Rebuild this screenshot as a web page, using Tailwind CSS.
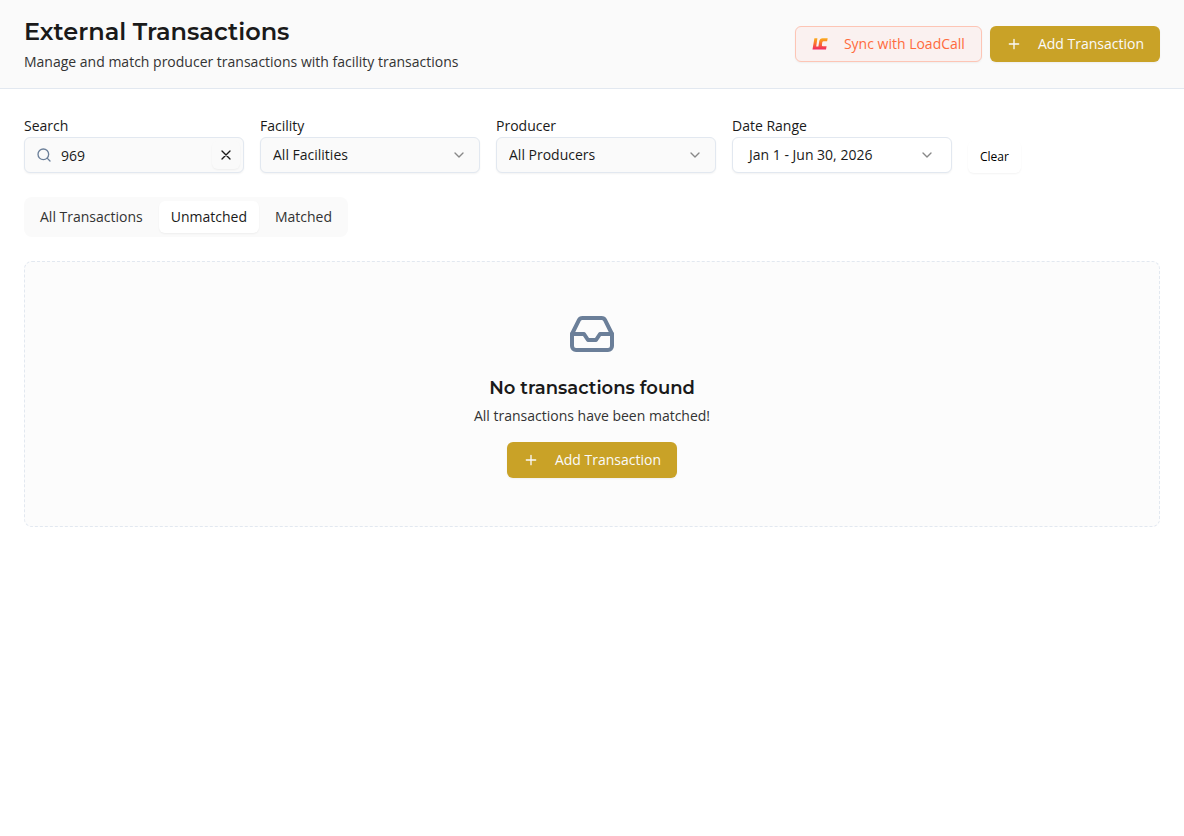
<!DOCTYPE html>
<html lang="en">
<head>
<meta charset="utf-8">
<meta name="viewport" content="width=device-width, initial-scale=1">
<title>External Transactions</title>
<script src="https://cdn.jsdelivr.net/npm/@tailwindcss/browser@4"></script>
</head>
<body class="min-h-screen bg-white font-['Open_Sans',sans-serif] text-[#1a1a1a]">
<svg class="hidden" aria-hidden="true">
  <symbol id="plus" viewBox="0 0 24 24" fill="none" stroke="currentColor" stroke-width="2" stroke-linecap="round" stroke-linejoin="round"><path d="M5 12h14M12 5v14"/></symbol>
  <symbol id="chevron" viewBox="0 0 24 24" fill="none" stroke="currentColor" stroke-width="2" stroke-linecap="round" stroke-linejoin="round"><path d="m6 9 6 6 6-6"/></symbol>
</svg>

<header class="flex flex-wrap items-center justify-between gap-4 border-b border-[#e2e8f0] bg-[#fafafa] px-6 py-4">
  <div>
    <h1 class="font-['Montserrat','Inter',sans-serif] text-2xl font-semibold">External Transactions</h1>
    <p class="mt-1 text-sm text-[#333333]">Manage and match producer transactions with facility transactions</p>
  </div>
  <div class="flex gap-2">
    <button type="button" class="flex h-9 items-center gap-4 rounded-md border border-[#fdc5b5] bg-[#faf1f0] px-4 text-sm text-[#ff6b3d] shadow-xs">
      <svg class="size-4" viewBox="0 0 16 16" aria-hidden="true">
        <defs><linearGradient id="lc" x1="0" y1="2" x2="0" y2="14" gradientUnits="userSpaceOnUse"><stop offset="0" stop-color="#fbb01c"/><stop offset=".5" stop-color="#fa6a30"/><stop offset="1" stop-color="#f0206a"/></linearGradient></defs>
        <path fill="url(#lc)" d="M2.4 2.2h3L4.2 10.6h2.2L7.2 5.2Q7.8 2.2 10.6 2.2H15.7L15.1 5.2H11.7Q10.5 5.2 10.3 6.3L9.9 9Q9.7 10.3 10.8 10.3H14.6L14 13.6H.5Z"/>
      </svg>
      Sync with LoadCall
    </button>
    <button type="button" class="flex h-9 items-center gap-4 rounded-md bg-[#c9a227] px-4 text-sm text-[#fafafa] shadow-xs">
      <svg class="size-4" aria-hidden="true"><use href="#plus"/></svg>
      Add Transaction
    </button>
  </div>
</header>

<main class="p-6">
  <div class="flex flex-wrap items-end gap-4">
    <div class="w-55">
      <div class="leading-6"><label for="search" class="text-sm">Search</label></div>
      <div class="relative">
        <svg class="absolute top-2.5 left-3 size-4 text-[#6b7f99]" viewBox="0 0 24 24" fill="none" stroke="currentColor" stroke-width="2" stroke-linecap="round" stroke-linejoin="round" aria-hidden="true"><circle cx="11" cy="11" r="8"/><path d="m21 21-4.3-4.3"/></svg>
        <input id="search" type="text" value="969" class="block h-9 w-full rounded-md border border-[#e2e8f0] bg-[#fafafa] px-9 text-sm shadow-xs">
        <button type="button" aria-label="Clear search" class="absolute top-1 right-1 flex size-7 items-center justify-center rounded-md shadow-xs">
          <svg class="size-4" viewBox="0 0 24 24" fill="none" stroke="currentColor" stroke-width="2" stroke-linecap="round" stroke-linejoin="round" aria-hidden="true"><path d="M18 6 6 18M6 6l12 12"/></svg>
        </button>
      </div>
    </div>
    <div class="w-55">
      <div class="leading-6"><label for="facility" class="text-sm">Facility</label></div>
      <div class="relative">
        <select id="facility" class="block h-9 w-full appearance-none rounded-md border border-[#e2e8f0] bg-[#fafafa] px-3 text-sm shadow-xs"><option>All Facilities</option></select>
        <svg class="pointer-events-none absolute top-2.5 right-[13px] size-4 text-[#888888]" aria-hidden="true"><use href="#chevron"/></svg>
      </div>
    </div>
    <div class="w-55">
      <div class="leading-6"><label for="producer" class="text-sm">Producer</label></div>
      <div class="relative">
        <select id="producer" class="block h-9 w-full appearance-none rounded-md border border-[#e2e8f0] bg-[#fafafa] px-3 text-sm shadow-xs"><option>All Producers</option></select>
        <svg class="pointer-events-none absolute top-2.5 right-[13px] size-4 text-[#888888]" aria-hidden="true"><use href="#chevron"/></svg>
      </div>
    </div>
    <div class="w-55">
      <div class="leading-6"><label for="dates" class="text-sm">Date Range</label></div>
      <button id="dates" type="button" class="flex h-9 w-full items-center justify-between rounded-md border border-[#e2e8f0] bg-white px-4 text-sm shadow-xs">
        Jan 1 - Jun 30, 2026
        <svg class="size-4 text-[#888888]" aria-hidden="true"><use href="#chevron"/></svg>
      </button>
    </div>
    <button type="button" class="h-8 rounded-md px-3 text-xs text-black shadow-xs">Clear</button>
  </div>

  <div role="tablist" aria-label="Transaction status" class="mt-6 inline-flex h-10 rounded-lg bg-[#fafafa] p-1 text-sm text-[#333333]">
    <button type="button" role="tab" aria-selected="false" class="rounded-md px-3">All Transactions</button>
    <button type="button" role="tab" aria-selected="true" class="mx-1 rounded-md bg-white px-3 text-[#1a1a1a] shadow-xs">Unmatched</button>
    <button type="button" role="tab" aria-selected="false" class="rounded-md px-3">Matched</button>
  </div>

  <section class="mt-6 flex flex-col items-center rounded-lg border border-dashed border-[#e2e8f0] bg-[#fcfcfc] p-12 text-center">
    <svg class="size-12 text-[#6b7f99]" viewBox="0 0 24 24" fill="none" stroke="currentColor" stroke-width="2" stroke-linecap="round" stroke-linejoin="round" aria-hidden="true"><path d="M22 12h-6l-2 3h-4l-2-3H2"/><path d="M5.45 5.11 2 12v6a2 2 0 0 0 2 2h16a2 2 0 0 0 2-2v-6l-3.45-6.89A2 2 0 0 0 16.76 4H7.24a2 2 0 0 0-1.79 1.11z"/></svg>
    <h2 class="mt-4 font-['Montserrat','Inter',sans-serif] text-lg font-semibold">No transactions found</h2>
    <p class="mt-1 text-sm text-[#333333]">All transactions have been matched!</p>
    <button type="button" class="mt-4 flex h-9 items-center gap-4 rounded-md bg-[#c9a227] px-4 text-sm text-[#fafafa] shadow-xs">
      <svg class="size-4" aria-hidden="true"><use href="#plus"/></svg>
      Add Transaction
    </button>
  </section>
</main>
</body>
</html>
